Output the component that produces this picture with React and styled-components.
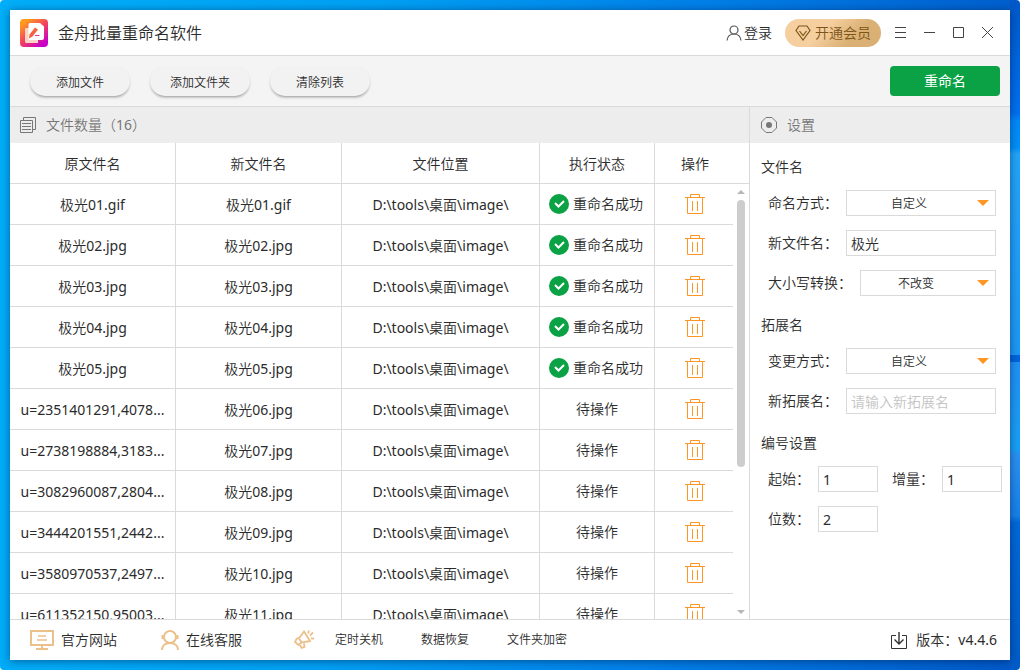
import { useState } from 'react';
import styled, { createGlobalStyle } from 'styled-components';

const GlobalStyle = createGlobalStyle`
  * {
    box-sizing: border-box;
  }
  body {
    margin: 0;
    background: #fff;
    color: #2b2b2b;
    font-family: "Noto Sans", "Noto Sans CJK SC DemiLight", "Noto Sans CJK SC", sans-serif;
    font-size: 14px;
    font-weight: 400;
    line-height: 20px;
  }
  button, input, select {
    font: inherit;
    color: inherit;
    margin: 0;
  }
  button {
    border: 0;
    padding: 0;
    background: none;
    cursor: pointer;
  }
  a {
    color: inherit;
    text-decoration: none;
  }
`;

const originals = [
  '极光01.gif', '极光02.jpg', '极光03.jpg', '极光04.jpg', '极光05.jpg',
  'u=2351401291,4078...', 'u=2738198884,3183...', 'u=3082960087,2804...',
  'u=3444201551,2442...', 'u=3580970537,2497...', 'u=611352150,95003...',
];

const files = originals.map((name, i) => ({
  name,
  newName: `极光${String(i + 1).padStart(2, '0')}.${i === 0 ? 'gif' : 'jpg'}`,
  path: 'D:\\tools\\桌面\\image\\',
  done: i < 5,
}));

export default function App() {
  const [rows, setRows] = useState(files);
  const [fileName, setFileName] = useState('极光');
  const [ext, setExt] = useState('');

  return (
    <Desktop>
      <GlobalStyle />
      <Window>
        <TitleBar>
          <LogoIcon />
          <Title>金舟批量重命名软件</Title>
          <Login><UserIcon />登录</Login>
          <Vip><DiamondIcon />开通会员</Vip>
          <WindowButtons>
            <button aria-label="菜单"><LineIcon d="M2 2.5h11M2 7.5h11M2 12.5h11" /></button>
            <button aria-label="最小化"><LineIcon d="M2 7.5h11" /></button>
            <button aria-label="最大化"><LineIcon d="M2.5 2.5h10v10h-10z" /></button>
            <button aria-label="关闭"><LineIcon d="M2 2l11 11M13 2L2 13" /></button>
          </WindowButtons>
        </TitleBar>

        <Toolbar>
          <PillButton>添加文件</PillButton>
          <PillButton>添加文件夹</PillButton>
          <PillButton onClick={() => setRows([])}>清除列表</PillButton>
          <RenameButton>重命名</RenameButton>
        </Toolbar>

        <Main>
          <FilePanel>
            <PanelHeader><PagesIcon />文件数量（16）</PanelHeader>
            <TableArea>
              <Table>
                <colgroup>
                  <col width="166" />
                  <col width="166" />
                  <col />
                  <col width="115" />
                  <col width="78" />
                  <col width="16" />
                </colgroup>
                <thead>
                  <tr>
                    <th>原文件名</th>
                    <th>新文件名</th>
                    <th>文件位置</th>
                    <th>执行状态</th>
                    <th>操作</th>
                    <th></th>
                  </tr>
                </thead>
                <tbody>
                  {rows.map((f) => (
                    <tr key={f.newName}>
                      <td>{f.name}</td>
                      <td>{f.newName}</td>
                      <td>{f.path}</td>
                      <td>{f.done ? <Status><CheckIcon />重命名成功</Status> : '待操作'}</td>
                      <td>
                        <DeleteButton aria-label="删除" onClick={() => setRows(rows.filter((r) => r !== f))}>
                          <TrashIcon />
                        </DeleteButton>
                      </td>
                      <td></td>
                    </tr>
                  ))}
                </tbody>
              </Table>
              <Scrollbar>
                <Arrow />
                <Thumb />
                <Arrow $down />
              </Scrollbar>
            </TableArea>
          </FilePanel>

          <Settings>
            <PanelHeader><TargetIcon />设置</PanelHeader>
            <Form>
              <Section>
                <h2>文件名</h2>
                <Field>
                  <label htmlFor="naming">命名方式：</label>
                  <SelectBox><select id="naming"><option>自定义</option></select></SelectBox>
                </Field>
                <Field>
                  <label htmlFor="filename">新文件名：</label>
                  <TextInput id="filename" value={fileName} onChange={(e) => setFileName(e.target.value)} />
                </Field>
                <Field $wide>
                  <label htmlFor="case">大小写转换：</label>
                  <SelectBox><select id="case"><option>不改变</option></select></SelectBox>
                </Field>
              </Section>
              <Section>
                <h2>拓展名</h2>
                <Field>
                  <label htmlFor="change">变更方式：</label>
                  <SelectBox><select id="change"><option>自定义</option></select></SelectBox>
                </Field>
                <Field>
                  <label htmlFor="ext">新拓展名：</label>
                  <TextInput id="ext" placeholder="请输入新拓展名" value={ext} onChange={(e) => setExt(e.target.value)} />
                </Field>
              </Section>
              <Section>
                <h2>编号设置</h2>
                <Numbers>
                  <NumberField>
                    <label htmlFor="start">起始：</label>
                    <TextInput id="start" defaultValue="1" />
                  </NumberField>
                  <NumberField>
                    <label htmlFor="step">增量：</label>
                    <TextInput id="step" defaultValue="1" />
                  </NumberField>
                  <NumberField>
                    <label htmlFor="digits">位数：</label>
                    <TextInput id="digits" defaultValue="2" />
                  </NumberField>
                </Numbers>
              </Section>
            </Form>
          </Settings>
        </Main>

        <Footer>
          <FooterLink href="#site"><MonitorIcon />官方网站</FooterLink>
          <FooterLink href="#service"><ServiceIcon />在线客服</FooterLink>
          <Promo>
            <HornIcon />
            <a href="#shutdown">定时关机</a>
            <a href="#recovery">数据恢复</a>
            <a href="#encrypt">文件夹加密</a>
          </Promo>
          <Version><UpdateIcon />版本：<span>v4.4.6</span></Version>
        </Footer>
      </Window>
    </Desktop>
  );
}

const LogoIcon = () => (
  <svg width="28" height="28" viewBox="0 0 28 28">
    <defs>
      <linearGradient id="logo" x1="0.1" y1="0" x2="0.9" y2="1">
        <stop offset="0.1" stopColor="#ff9a1f" />
        <stop offset="0.5" stopColor="#f2415f" />
        <stop offset="0.9" stopColor="#c800c8" />
      </linearGradient>
    </defs>
    <rect width="28" height="28" rx="4" fill="url(#logo)" />
    <path d="M5 10q0-1 1-1H16q2 0 2 2v13H6.500Q5 24 5 22.500z" fill="#fcd3c4" />
    <path d="M10 4h10l4 3.500V19q0 2-2 2H10q-1.500 0-1.500-1.500V5.500Q8.500 4 10 4z" fill="#fff" />
    <path d="M9 19.500l.5-4 5.500-7 3 2-5.500 7z" fill="#f4633f" />
    <path d="M15 16.500h4.500" stroke="#e0359a" />
  </svg>
);

const UserIcon = () => (
  <svg width="16" height="16" viewBox="0 0 16 16" fill="none" stroke="#555" strokeWidth="1.200">
    <circle cx="8" cy="5" r="4" />
    <path d="M1 15.500c.5-4 3-6.500 7-6.500s6.500 2.500 7 6.500" />
  </svg>
);

const DiamondIcon = () => (
  <svg width="16" height="16" viewBox="0 0 16 16" fill="none" stroke="#7d5518" strokeWidth="1.200">
    <path d="M4 1h8l3 4.500L8 15 1 5.500z" />
    <path d="M4.500 6L8 10.500 11.500 6" />
  </svg>
);

const LineIcon = ({ d }) => (
  <svg width="15" height="15" viewBox="0 0 15 15" fill="none" stroke="#444">
    <path d={d} />
  </svg>
);

const PagesIcon = () => (
  <svg width="16" height="16" viewBox="0 0 16 16" fill="none" stroke="#777">
    <path d="M3.500 3V.5h12v12H13M.5 3.500h12v12H.5zM2 6.500h9M2 9.500h9M2 12.500h9" />
  </svg>
);

const TargetIcon = () => (
  <svg width="16" height="16" viewBox="0 0 16 16">
    <path d="M5 .5h6L15.500 5v6L11 15.500H5L.5 11V5z" fill="none" stroke="#777" />
    <circle cx="8" cy="8" r="3" fill="#777" />
  </svg>
);

const CheckIcon = () => (
  <svg width="20" height="20" viewBox="0 0 20 20">
    <circle cx="10" cy="10" r="10" fill="#0ba145" />
    <path d="M6 9l3.500 3.500L15 7" fill="none" stroke="#fff" strokeWidth="2" />
  </svg>
);

const TrashIcon = () => (
  <svg width="20" height="20" viewBox="0 0 20 20" fill="none" stroke="#ff9623">
    <path d="M0 3.500h20M5.500 3V.5h9V3M2.500 4v15.500h15V4M7.500 7v10M12.500 7v10" />
  </svg>
);

const MonitorIcon = () => (
  <svg width="24" height="20" viewBox="0 0 24 20" fill="none" stroke="#ecc08b" strokeWidth="2">
    <path d="M1 1h22v14H1zM12 15v4M6 19h12" />
    <path d="M8 6h8M7 10h10" strokeWidth="1.500" />
  </svg>
);

const ServiceIcon = () => (
  <svg width="18" height="20" viewBox="0 0 18 20" fill="none" stroke="#ecc08b" strokeWidth="2">
    <circle cx="9" cy="7" r="6" />
    <path d="M1 20c0-4 3-7 8-7s8 3 8 7" />
    <path d="M1.500 5v4M16.500 5v4" />
  </svg>
);

const HornIcon = () => (
  <svg width="20" height="20" viewBox="0 0 20 20" fill="none" stroke="#ecc08b" strokeWidth="1.800">
    <path d="M10 1.500L16 11l-8.500 1.500L4.500 15 1 12l1.500-3L6 7z" />
    <path d="M5 8.500l3 4.500M6 15l1.500 3 3-1-.5-3.500M14 3.500l1-3M16 5.500l3-3M17 8.500h3" />
  </svg>
);

const UpdateIcon = () => (
  <svg width="16" height="17" viewBox="0 0 16 17" fill="none" stroke="#333">
    <path d="M5 3.500H.5v13h15v-13H11" />
    <path d="M8 0v12M3.500 7.500L8 12l4.500-4.500" strokeWidth="1.400" />
  </svg>
);

const Desktop = styled.div`
  height: 100vh;
  padding: 10px;
  border-radius: 4px;
  background:
    linear-gradient(
      #0058c8 0%, #0070f0 17%, #0088f8 18%, #0090f8 22%, #22a4f8 23%, #1c98f4 53%,
      #0064dc 53%, #0064dc 54%, #2090f4 54%, #18a0f4 67%, #2a90f0 68%, #1880e8 77%,
      #0068d8 78%, #005cc8 100%
    ) right / 10px 100% no-repeat,
    linear-gradient(95deg, #00aef8 0%, #00a0f4 35%, #0080e8 65%, #0058c8 100%);
`;

const Window = styled.div`
  height: 100%;
  display: flex;
  flex-direction: column;
  background: #fff;
  box-shadow: 0 1px 8px rgba(0, 20, 60, 0.5);
`;

const TitleBar = styled.header`
  display: flex;
  align-items: center;
  height: 46px;
  padding: 0 15px 0 10px;
  border-bottom: 1px solid #dadada;
`;

const Title = styled.h1`
  flex: 1;
  margin: 0 0 0 10px;
  font-size: 16px;
  font-weight: 400;
`;

const Login = styled.button`
  display: flex;
  align-items: center;
  gap: 2px;
  margin-right: 13px;
`;

const Vip = styled.button`
  display: flex;
  align-items: center;
  gap: 4px;
  height: 28px;
  margin-right: 12px;
  padding: 0 10px;
  border-radius: 14px;
  color: #7d5518;
  background: linear-gradient(135deg, #f5cf9f 40%, #dab074 70%);
`;

const WindowButtons = styled.div`
  display: flex;
  gap: 14px;
  button {
    width: 15px;
    height: 15px;
    display: flex;
  }
`;

const Toolbar = styled.div`
  display: flex;
  align-items: center;
  gap: 20px;
  height: 51px;
  padding: 0 10px 0 20px;
  background: #f4f4f4;
  border-bottom: 1px solid #dadada;
`;

const PillButton = styled.button`
  width: 100px;
  height: 30px;
  padding-top: 3px;
  border-radius: 15px;
  font-size: 12px;
  background: #f2f2f2;
  box-shadow: 0 2px 3px -1px rgba(0, 0, 0, 0.4);
`;

const RenameButton = styled.button`
  width: 110px;
  height: 30px;
  margin-left: auto;
  border-radius: 4px;
  color: #fff;
  font-family: "Noto Sans", "Noto Sans CJK SC", sans-serif;
  background: #0ba145;
`;

const Main = styled.main`
  flex: 1;
  min-height: 0;
  display: flex;
`;

const FilePanel = styled.section`
  flex: 1;
  display: flex;
  flex-direction: column;
`;

const PanelHeader = styled.div`
  display: flex;
  align-items: center;
  gap: 10px;
  height: 36px;
  padding: 0 10px;
  color: #777;
  background: #ededed;
`;

const TableArea = styled.div`
  position: relative;
  flex: 1;
  min-height: 0;
  overflow: hidden;
`;

const Table = styled.table`
  width: 100%;
  table-layout: fixed;
  border-collapse: separate;
  border-spacing: 0;
  th, td {
    height: 41px;
    padding: 2px 0 0;
    border-right: 1px solid #dadada;
    border-bottom: 1px solid #dadada;
    font-weight: 400;
    text-align: center;
    white-space: nowrap;
  }
  th:nth-child(n + 5), td:nth-child(n + 5) {
    border-right: 0;
  }
  th:nth-child(5), td:nth-child(5) {
    padding-left: 2px;
  }
  td:nth-child(n + 4) {
    padding-top: 0;
  }
  td:last-child {
    border-bottom: 0;
  }
`;

const Status = styled.span`
  display: flex;
  align-items: center;
  justify-content: center;
  gap: 4px;
  padding-right: 2px;
`;

const DeleteButton = styled.button`
  display: block;
  width: 20px;
  height: 20px;
  margin: 0 auto;
`;

/* lies over the empty last column of the table */
const Scrollbar = styled.div`
  position: absolute;
  top: 47px;
  right: 3px;
  bottom: 5px;
  display: flex;
  flex-direction: column;
  align-items: center;
  width: 10px;
`;

const Thumb = styled.div`
  width: 8px;
  height: 267px;
  margin: 6px 0 auto;
  border-radius: 4px;
  background: #cdcdcd;
`;

const Arrow = styled.div`
  border: 4px solid transparent;
  border-top: ${(p) => (p.$down ? '4px solid #b4b8bc' : '0')};
  border-bottom: ${(p) => (p.$down ? '0' : '4px solid #b4b8bc')};
`;

const Settings = styled.aside`
  width: 261px;
  border-left: 1px solid #dadada;
  ${PanelHeader} {
    padding-left: 11px;
  }
`;

const Form = styled.form`
  padding: 14px 8px 0 11px;
`;

const Section = styled.section`
  margin-bottom: 19px;
  h2 {
    margin: 0 0 13px;
    font-size: 14px;
    font-weight: 400;
  }
`;

const Field = styled.div`
  display: grid;
  grid-template-columns: ${(p) => (p.$wide ? '92px' : '78px')} 1fr;
  align-items: center;
  margin: 0 6px 14px 7px;
`;

const SelectBox = styled.div`
  position: relative;
  select {
    display: block;
    width: 100%;
    height: 26px;
    padding: 2px 24px 0 0;
    border: 1px solid #dadada;
    border-radius: 0;
    background: #fff;
    font-size: 12px;
    text-align: center;
    text-align-last: center;
    appearance: none;
  }
  &::after {
    content: "";
    position: absolute;
    top: 10px;
    right: 7px;
    border: 6px solid transparent;
    border-top-color: #ff9623;
    border-bottom: 0;
    pointer-events: none;
  }
`;

const TextInput = styled.input`
  width: 100%;
  height: 26px;
  padding: 0 4px;
  border: 1px solid #dadada;
  background: #fff;
  &::placeholder {
    color: #c4c4c4;
  }
`;

const Numbers = styled.div`
  display: grid;
  grid-template-columns: 110px 110px;
  gap: 14px;
  margin-left: 7px;
`;

const NumberField = styled.div`
  display: grid;
  grid-template-columns: 50px 1fr;
  align-items: center;
`;

const Footer = styled.footer`
  display: flex;
  align-items: center;
  height: 41px;
  padding: 0 13px 0 20px;
  border-top: 1px solid #dadada;
`;

const FooterLink = styled.a`
  display: flex;
  align-items: center;
  gap: 7px;
  margin-right: 44px;
`;

const Promo = styled.nav`
  display: flex;
  align-items: center;
  gap: 38px;
  margin-left: 8px;
  font-size: 12px;
  svg {
    margin-right: -17px;
  }
`;

const Version = styled.button`
  display: flex;
  align-items: center;
  margin-left: auto;
  svg {
    margin-right: 9px;
  }
`;
